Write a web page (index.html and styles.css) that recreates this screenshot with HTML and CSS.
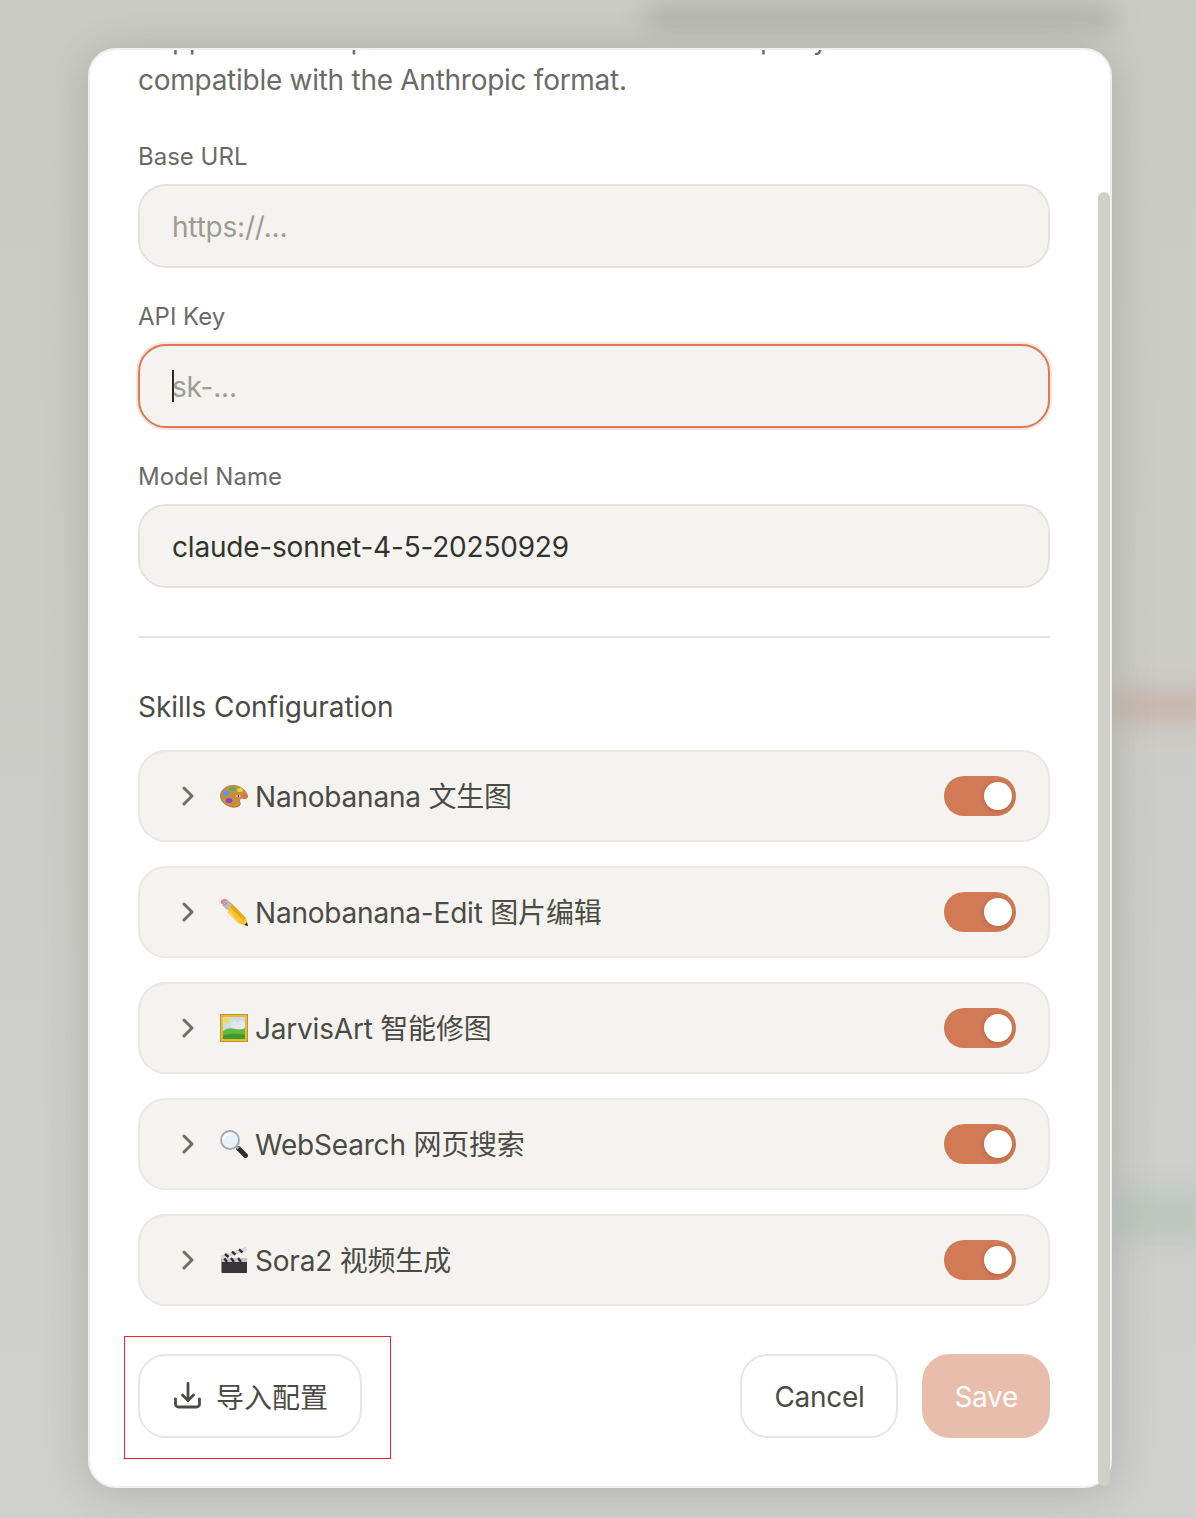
FILE: index.html
```html
<!DOCTYPE html>
<html lang="en">
<head>
<meta charset="utf-8">
<title>Settings</title>
<link rel="stylesheet" href="styles.css">
</head>
<body>
<div class="backdrop">
  <div class="blur blur-top"></div>
  <div class="blur blur-orange"></div>
  <div class="blur blur-green"></div>
</div>
<main class="overlay">
  <div class="modal-shell">
    <section class="modal">
      <div class="content">
        <p class="intro">Supports Anthropic official APIs and other third-party APIs<br>compatible with the Anthropic format.</p>
        <div class="fields">
          <div class="field">
            <label class="label">Base URL</label>
            <input class="input" type="text" placeholder="https://...">
          </div>
          <div class="field">
            <label class="label">API Key</label>
            <div class="input-wrap">
              <input class="input input-focus" type="text" placeholder="sk-...">
              <span class="caret"></span>
            </div>
          </div>
          <div class="field">
            <label class="label">Model Name</label>
            <input class="input" type="text" value="claude-sonnet-4-5-20250929">
          </div>
        </div>
        <hr class="divider">
        <h2 class="heading">Skills Configuration</h2>
        <div class="skills">
          <div class="skill">
            <svg class="chevron" viewBox="0 0 12 20"><path d="M2 2l8 8-8 8"/></svg>
            <svg class="emoji" viewBox="0 0 28 28">
              <path d="M.500 13C1 7 8 3 14 3.500c6 .5 12.500 4.500 13.500 10.500.4 2.300-1.500 3-3.500 2.500-2.200-.5-4.500 0-4.500 2.200 0 1.800 1.500 2.800.5 4.300-1.300 2-5 2.700-8.500 2C5.500 23.500 0 19.500.500 13z" fill="#c98d42" stroke="#a56c2b" stroke-width=".7"/>
              <ellipse cx="6" cy="11" rx="3.300" ry="2.600" fill="#4a9fe0"/>
              <ellipse cx="12.500" cy="7" rx="3" ry="2.300" fill="#55b54a"/>
              <ellipse cx="20" cy="8" rx="2.800" ry="2.100" fill="#f2d234"/>
              <ellipse cx="24.500" cy="14" rx="2.500" ry="2" fill="#ee6a4c"/>
              <ellipse cx="9" cy="18.500" rx="3.300" ry="2.500" fill="#8a45c4"/>
              <path d="M16 14c1.200-1.500 3.500-1.500 4.800 0-1.300 1.200-3.600 1.200-4.800 0z" fill="#fff"/>
              <circle cx="18.400" cy="14" r=".9" fill="#333"/>
            </svg>
            <span class="skill-name">Nanobanana 文生图</span>
            <button class="toggle" type="button"><span class="knob"></span></button>
          </div>
          <div class="skill">
            <svg class="chevron" viewBox="0 0 12 20"><path d="M2 2l8 8-8 8"/></svg>
            <svg class="emoji" viewBox="0 0 28 28">
              <path d="M6 10l5-5 15 15 2 8-8-2z" fill="#f4c430"/>
              <path d="M11 5l15 15-2.500 2.500-15-15z" fill="#e6a81f"/>
              <path d="M24.500 27l3.500 1-1-3.500z" fill="#1f1f1f"/>
              <path d="M3 1.500c1-1 2.700-1 3.700 0l4.300 3.500-5 5-4.500-4.200c-1-1-1-2.600 0-3.700z" fill="#e8808a"/>
              <path d="M6.800 2l5 5-5 5-5-5z" fill="#b9bcc2"/>
              <path d="M7.500 4l-3.500 3.500" stroke="#8a8d93" stroke-width="1"/>
              <path d="M20 26l-2-.500-11-11 2-2z" fill="#fbd964"/>
            </svg>
            <span class="skill-name">Nanobanana-Edit 图片编辑</span>
            <button class="toggle" type="button"><span class="knob"></span></button>
          </div>
          <div class="skill">
            <svg class="chevron" viewBox="0 0 12 20"><path d="M2 2l8 8-8 8"/></svg>
            <svg class="emoji" viewBox="0 0 28 28">
              <rect x="0.500" y="0.500" width="27" height="27" fill="#e9b93a" stroke="#c6932a"/>
              <rect x="3" y="3" width="22" height="22" fill="#c9dde8"/>
              <circle cx="6.500" cy="6.500" r="2.800" fill="#f6d94e"/>
              <path d="M11 9l3.500-2.500 3 2 3.500-2 4 2.500v6h-14z" fill="#e4e8ec"/>
              <path d="M3 17c5-3.500 9-3 13-2s6 .5 9-1v11h-22z" fill="#62b843"/>
              <path d="M3 21.500c6-2 14-2 22-1v4.500h-22z" fill="#3f9a2e"/>
            </svg>
            <span class="skill-name">JarvisArt 智能修图</span>
            <button class="toggle" type="button"><span class="knob"></span></button>
          </div>
          <div class="skill">
            <svg class="chevron" viewBox="0 0 12 20"><path d="M2 2l8 8-8 8"/></svg>
            <svg class="emoji" viewBox="0 0 28 28">
              <path d="M18.500 18.500l7 7" stroke="#2f2f32" stroke-width="4.800" stroke-linecap="round"/>
              <path d="M16 16l2.500 2.500" stroke="#9a9ca2" stroke-width="3"/>
              <circle cx="10" cy="10" r="9" fill="#e9f1f9" stroke="#a3a8b0" stroke-width="1.800"/>
              <path d="M4 8.500c1-3 3-4.500 6-4.500" fill="none" stroke="#fff" stroke-width="2" stroke-linecap="round"/>
            </svg>
            <span class="skill-name">WebSearch 网页搜索</span>
            <button class="toggle" type="button"><span class="knob"></span></button>
          </div>
          <div class="skill">
            <svg class="chevron" viewBox="0 0 12 20"><path d="M2 2l8 8-8 8"/></svg>
            <svg class="emoji" viewBox="0 0 28 28">
              <rect x="1.500" y="12" width="25.500" height="15" rx="1" fill="#35353a"/>
              <rect x="1.500" y="12" width="25.500" height="4" fill="#c4c4c8"/>
              <path d="M4 12l3 4M11 12l3 4M18 12l3 4" stroke="#2a2a2e" stroke-width="2.200"/>
              <path d="M.500 9.500L26 1l1.300 3.800L1.800 13.300z" fill="#d6d6da"/>
              <path d="M5 8l3.500 3M12 5.700l3.500 3M19 3.400l3.500 3" stroke="#2a2a2e" stroke-width="2.400"/>
            </svg>
            <span class="skill-name">Sora2 视频生成</span>
            <button class="toggle" type="button"><span class="knob"></span></button>
          </div>
        </div>
        <footer class="footer">
          <button class="btn btn-import" type="button">
            <svg class="import-icon" viewBox="0 0 28 28"><path d="M1.500 17v5a3 3 0 0 0 3 3h18a3 3 0 0 0 3-3v-5"/><path d="M8.500 13l5.500 5.500 5.500-5.500"/><path d="M14 18.500V1.500"/></svg>
            <span>导入配置</span>
            <span class="annotation"></span>
          </button>
          <div class="actions">
            <button class="btn" type="button">Cancel</button>
            <button class="btn btn-save" type="button">Save</button>
          </div>
        </footer>
      </div>
    </section>
    <div class="thumb"></div>
  </div>
</main>
</body>
</html>
```
FILE: styles.css
```css
* { box-sizing: border-box; }
html, body { margin: 0; height: 100%; }
body {
  width: 1196px;
  height: 1518px;
  overflow: hidden;
  position: relative;
  background: linear-gradient(#cbcbc6, #cdcdc9 60%, #d0d0ce);
  font-family: Inter, "Noto Sans CJK SC", sans-serif;
  color: #4b4b45;
}
.backdrop { position: absolute; inset: 0; overflow: hidden; }
.blur { position: absolute; filter: blur(12px); }
.blur-top { left: 646px; top: 6px; width: 470px; height: 22px; background: #b0b0aa; }
.blur-orange { left: 1116px; top: 690px; width: 100px; height: 32px; background: #c6b6ab; }
.blur-green { left: 1116px; top: 1190px; width: 100px; height: 50px; background: #bcc8bf; }
.overlay {
  position: relative;
  height: 100%;
  padding: 48px 84px 30px 88px;
  display: flex;
}
.modal-shell {
  position: relative;
  flex: 1;
  border-radius: 28px;
  box-shadow: 0 4px 44px rgba(70, 70, 65, .24);
}
.modal {
  height: 100%;
  background: #fff;
  border: 2px solid #f0efed;
  border-radius: 28px;
  overflow: hidden;
}
.content { margin-top: -31px; padding: 0 60px 0 48px; }
.intro {
  margin: 0;
  font-size: 28px;
  line-height: 41px;
  letter-spacing: -.27px;
  color: #6b6b64;
}
.fields { display: flex; flex-direction: column; gap: 32px; margin-top: 39px; }
.label {
  display: block;
  font-size: 24px;
  line-height: 34px;
  margin-bottom: 10px;
  color: #6b6b64;
  font-weight: 420;
}
.input-wrap { position: relative; }
.input {
  display: block;
  width: 100%;
  height: 84px;
  padding: 2px 32px 0;
  font: inherit;
  font-size: 28px;
  letter-spacing: -.2px;
  color: #33332e;
  background: #f4f3ef;
  border: 2px solid #e3e2dc;
  border-radius: 28px;
  outline: none;
}
.input::placeholder { color: #9c9c95; opacity: 1; }
.input-focus {
  border-color: #d97b55;
  box-shadow: 0 0 0 2px rgba(217, 123, 85, .2);
}
.caret {
  position: absolute;
  left: 34px;
  top: 26px;
  width: 2px;
  height: 32px;
  background: #2a2a26;
}
.divider { margin: 48px 0 0; border: 0; height: 2px; background: #e6e5e0; }
.heading {
  margin: 51px 0 25px;
  font-size: 28px;
  line-height: 36px;
  font-weight: 420;
  letter-spacing: -.05px;
  color: #4b4b45;
}
.skills { display: flex; flex-direction: column; gap: 24px; }
.skill {
  height: 92px;
  display: flex;
  align-items: center;
  padding: 0 32px 0 42px;
  background: #f4f3ef;
  border: 2px solid #e9e8e5;
  border-radius: 28px;
}
.chevron {
  width: 12px;
  height: 20px;
  fill: none;
  stroke: #6f6f69;
  stroke-width: 3;
  stroke-linecap: round;
  stroke-linejoin: round;
}
.emoji { width: 28px; height: 28px; margin-left: 26px; flex: none; }
.skill-name {
  margin-left: 7px;
  padding-top: 1px;
  font-size: 28px;
  line-height: 36px;
  font-weight: 420;
  letter-spacing: -.2px;
  flex: 1;
}
.toggle {
  width: 72px;
  height: 40px;
  padding: 0 4px 0 0;
  border: 0;
  border-radius: 20px;
  background: #d07a56;
  display: flex;
  align-items: center;
  justify-content: flex-end;
}
.knob {
  width: 28px;
  height: 28px;
  border-radius: 50%;
  background: #fff;
  box-shadow: 0 1px 4px rgba(90, 40, 20, .25);
}
.footer { display: flex; justify-content: space-between; margin-top: 48px; }
.actions { display: flex; gap: 24px; }
.btn {
  position: relative;
  height: 84px;
  padding: 2px 32px 0;
  font: inherit;
  font-size: 28px;
  font-weight: 420;
  letter-spacing: -.3px;
  color: #4b4b45;
  background: #fff;
  border: 2px solid #e7e6e3;
  border-radius: 28px;
  display: flex;
  align-items: center;
}
.btn-import { gap: 14px; padding: 0 32px 0 34px; letter-spacing: 0; }
.import-icon {
  width: 28px;
  height: 28px;
  fill: none;
  stroke: #4b4b45;
  stroke-width: 2.800;
  stroke-linecap: round;
  stroke-linejoin: round;
}
.btn-save { padding: 2px 30px 0; background: #e9bdac; border-color: #e9bdac; color: #fff; }
.annotation {
  position: absolute;
  left: -16px;
  top: -20px;
  width: 267px;
  height: 123px;
  border: 1px solid #f0222e;
}
.thumb {
  position: absolute;
  right: 2px;
  top: 144px;
  width: 12px;
  height: 1294px;
  border-radius: 6px;
  background: #d0d0cb;
}
```
